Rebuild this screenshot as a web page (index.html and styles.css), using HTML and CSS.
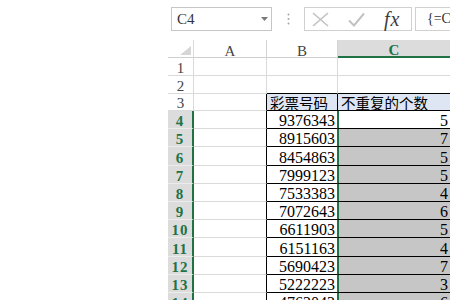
FILE: index.html
```html
<!DOCTYPE html>
<html lang="zh-CN">
<head>
    <meta charset="UTF-8">
    <meta name="viewport" content="width=device-width, initial-scale=1.0">
    <title>彩票号码 - 不重复的个数</title>
    <link rel="stylesheet" href="styles.css">
</head>
<body>
    <div class="excel">
        <div class="formula-bar">
            <div class="name-box">
                <span>C4</span>
                <svg class="caret" width="7" height="4" viewBox="0 0 7 4"><path d="M0 0H7L3.5 4Z" fill="#7a7a7a"/></svg>
            </div>
            <svg class="grip" width="3" height="12" viewBox="0 0 3 12">
                <circle cx="1.5" cy="1.5" r="1" fill="#a6a6a6"/>
                <circle cx="1.5" cy="6" r="1" fill="#a6a6a6"/>
                <circle cx="1.5" cy="10.5" r="1" fill="#a6a6a6"/>
            </svg>
            <div class="fx-tools">
                <svg width="17" height="15" viewBox="0 0 17 15"><path d="M1 1L16 14M16 1L1 14" stroke="#c2c2c2" stroke-width="1.6" fill="none"/></svg>
                <svg width="17" height="15" viewBox="0 0 17 15"><path d="M1 8.5L6 13.5L16 1.5" stroke="#c2c2c2" stroke-width="2" fill="none"/></svg>
                <span class="fx">fx</span>
            </div>
            <div class="formula">{=COUNT(0/(MATCH(MID(B4,ROW($1:$7),1),MID(B4,ROW($1:$7),1),0)=ROW($1:$7)))}</div>
        </div>

        <div class="sheet">
            <!-- column headers -->
            <div class="corner">
                <svg width="11" height="9" viewBox="0 0 11 9"><path d="M11 0V9H0Z" fill="#d6d6d6"/></svg>
            </div>
            <div class="ch">A</div>
            <div class="ch">B</div>
            <div class="ch cur">C</div>

            <div class="rh">1</div>
            <div class="cell"></div>
            <div class="cell"></div>
            <div class="cell"></div>

            <div class="rh">2</div>
            <div class="cell"></div>
            <div class="cell top"></div>
            <div class="cell top"></div>

            <div class="rh">3</div>
            <div class="cell edge"></div>
            <div class="cell tbl colb label">彩票号码</div>
            <div class="cell tbl label">不重复的个数</div>

            <div class="rh sel">4</div>
            <div class="cell edge"></div>
            <div class="cell tbl colb in num">9376343</div>
            <div class="cell tbl colc in active num">5</div>

            <div class="rh sel">5</div>
            <div class="cell edge"></div>
            <div class="cell tbl colb in num">8915603</div>
            <div class="cell tbl colc in num">7</div>

            <div class="rh sel">6</div>
            <div class="cell edge"></div>
            <div class="cell tbl colb in num">8454863</div>
            <div class="cell tbl colc in num">5</div>

            <div class="rh sel">7</div>
            <div class="cell edge"></div>
            <div class="cell tbl colb in num">7999123</div>
            <div class="cell tbl colc in num">5</div>

            <div class="rh sel">8</div>
            <div class="cell edge"></div>
            <div class="cell tbl colb in num">7533383</div>
            <div class="cell tbl colc in num">4</div>

            <div class="rh sel">9</div>
            <div class="cell edge"></div>
            <div class="cell tbl colb in num">7072643</div>
            <div class="cell tbl colc in num">6</div>

            <div class="rh sel">10</div>
            <div class="cell edge"></div>
            <div class="cell tbl colb in num">6611903</div>
            <div class="cell tbl colc in num">5</div>

            <div class="rh sel">11</div>
            <div class="cell edge"></div>
            <div class="cell tbl colb in num">6151163</div>
            <div class="cell tbl colc in num">4</div>

            <div class="rh sel">12</div>
            <div class="cell edge"></div>
            <div class="cell tbl colb in num">5690423</div>
            <div class="cell tbl colc in num">7</div>

            <div class="rh sel">13</div>
            <div class="cell edge"></div>
            <div class="cell tbl colb in num">5222223</div>
            <div class="cell tbl colc in num">3</div>

            <div class="rh sel">14</div>
            <div class="cell edge"></div>
            <div class="cell tbl colb in num">4762043</div>
            <div class="cell tbl colc in num">6</div>
        </div>
    </div>
</body>
</html>
```

FILE: styles.css
```css
html,
body {
    margin: 0;
    padding: 0;
    overflow: hidden;
    background: #ffffff;
}

.excel {
    padding-left: 168px;
    font-family: "Liberation Serif", serif;
    color: #000;
}

/* formula bar */
.formula-bar {
    display: flex;
    align-items: center;
    height: 24px;
    margin-top: 7px;
}

.name-box {
    box-sizing: border-box;
    display: flex;
    align-items: center;
    justify-content: space-between;
    flex-shrink: 0;
    width: 101px;
    height: 24px;
    margin-left: 3px;
    padding: 0 3px 0 5px;
    border: 1px solid #c6c6c6;
    font-size: 15px;
    color: #333;
}

.grip {
    flex-shrink: 0;
    margin-left: 15px;
}

.fx-tools {
    box-sizing: border-box;
    display: flex;
    align-items: center;
    gap: 19px;
    flex-shrink: 0;
    width: 108px;
    height: 24px;
    margin-left: 14px;
    padding-left: 7px;
    border: 1px solid #d0d0d0;
}

.fx {
    font-style: italic;
    font-size: 20px;
    letter-spacing: 1px;
    color: #3c3c3c;
    line-height: 1;
}

.formula {
    box-sizing: border-box;
    display: flex;
    align-items: center;
    flex-shrink: 0;
    width: 320px;
    height: 24px;
    margin-left: 3px;
    padding-left: 11px;
    border: 1px solid #d0d0d0;
    font-size: 14px;
    color: #333;
    white-space: nowrap;
    overflow: hidden;
}

/* grid */
.sheet {
    display: grid;
    grid-template-columns: 26px 73px 71px 113px;
    grid-template-rows: 18px 18px 18px 17px repeat(11, 18.2px);
    margin-top: 9px;
}

.sheet > div {
    box-sizing: border-box;
    display: flex;
    align-items: flex-end;
    white-space: nowrap;
    border-right: 1px solid #dadada;
    border-bottom: 1px solid #dadada;
}

.corner {
    justify-content: flex-end;
    padding: 0 2px 2px 0;
    border-bottom-color: #cfcfcf !important;
}

.ch {
    justify-content: center;
    font-size: 15px;
    line-height: 12px;
    color: #444;
    border-right-color: #d4d4d4 !important;
    border-bottom-color: #cfcfcf !important;
}

.ch.cur {
    background: #dcdcdc;
    color: #217346;
    font-weight: bold;
    border-bottom: 2px solid #217346 !important;
}

.rh {
    justify-content: center;
    font-size: 15px;
    line-height: 14px;
    color: #444;
}

.rh.sel {
    background: #dcdcdc;
    color: #217346;
    font-weight: bold;
    letter-spacing: 1px;
    border-right: 2px solid #217346 !important;
    border-bottom-color: #ececec !important;
}

.cell.edge {
    border-right-color: #000;
}

.cell.top {
    border-bottom-color: #000;
}

.cell.tbl {
    border-bottom-color: #000;
}

.cell.colb {
    border-right-color: #000;
}

.cell.colb.in {
    border-right-color: #217346;
}

.cell.colc.in {
    background: #c6c6c6;
    box-shadow: inset 1px 0 #217346;
}

.cell.colc.active {
    background: #ffffff;
}

.label {
    background: #dde6f2;
    padding-left: 3px;
    font-family: "Noto Sans CJK SC", sans-serif;
    font-size: 14.5px;
    line-height: 14px;
}

.num {
    justify-content: flex-end;
    padding-right: 2px;
    font-size: 16px;
    line-height: 14px;
}
```
